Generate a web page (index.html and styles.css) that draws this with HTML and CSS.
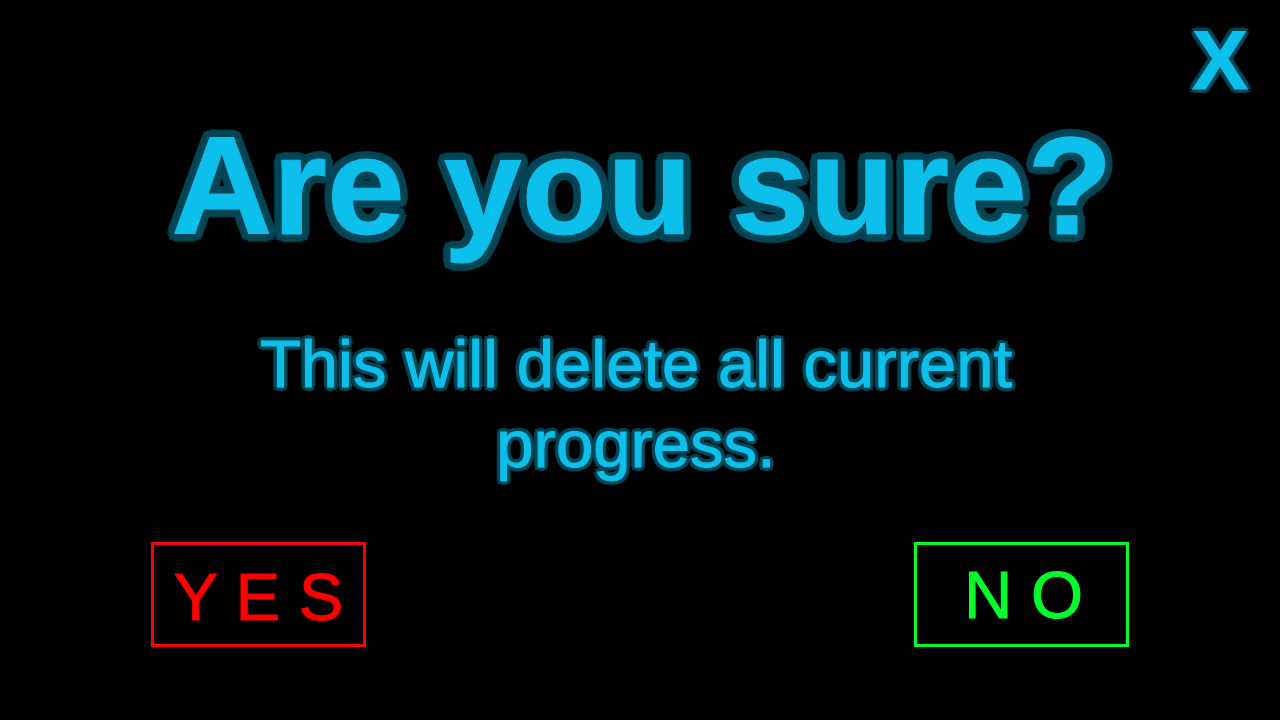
FILE: index.html
```html
<!DOCTYPE html>
<html lang="en">
<head>
<meta charset="utf-8">
<title>Are you sure?</title>
<link rel="stylesheet" href="styles.css">
</head>
<body>
<main class="dialog">
  <header class="top"><button class="close" type="button" aria-label="X, close">X</button></header>
  <h1 class="title">Are you sure?</h1>
  <p class="message">This will delete all current progress.</p>
  <div class="actions">
    <button class="choice yes" type="button">Y E S</button>
    <button class="choice no" type="button">N O</button>
  </div>
</main>
</body>
</html>
```

FILE: styles.css
```css
* { box-sizing: border-box; }
body {
  margin: 0;
  background: #000;
  color: #0dbfeb;
  font-family: "Liberation Sans", Arial, sans-serif;
}
.dialog {
  display: flex;
  flex-direction: column;
  min-height: 100vh;
}
.top {
  display: flex;
  justify-content: flex-end;
  padding: 12px 32px 0 0;
}
button {
  padding: 0;
  background: none;
  font-family: inherit;
  cursor: pointer;
}
.close {
  border: 0;
  color: inherit;
  font-size: 84px;
  font-weight: bold;
  line-height: 96px;
  -webkit-text-stroke: 1px #0dbfeb;
}
.title {
  margin: 0;
  padding-left: 4px;
  font-size: 140px;
  line-height: 156px;
  text-align: center;
  -webkit-text-stroke: 1px #0dbfeb;
}
.message {
  max-width: 880px;
  margin: 60px auto 0;
  padding-right: 8px;
  font-size: 67px;
  line-height: 80px;
  text-align: center;
  -webkit-text-stroke: 1px #0dbfeb;
}
/* Outline glow: a ring of copies around each letter */
.title {
  text-shadow:
    8px 0 1px #044656, 7px 3px 1px #044656, 6px 6px 1px #044656, 3px 7px 1px #044656,
    0 8px 1px #044656, -3px 7px 1px #044656, -6px 6px 1px #044656, -7px 3px 1px #044656,
    -8px 0 1px #044656, -7px -3px 1px #044656, -6px -6px 1px #044656, -3px -7px 1px #044656,
    0 -8px 1px #044656, 3px -7px 1px #044656, 6px -6px 1px #044656, 7px -3px 1px #044656;
}
.close, .message {
  text-shadow:
    4px 0 1px #044656, 3px 3px 1px #044656, 0 4px 1px #044656, -3px 3px 1px #044656,
    -4px 0 1px #044656, -3px -3px 1px #044656, 0 -4px 1px #044656, 3px -3px 1px #044656;
}
.actions {
  display: flex;
  justify-content: space-between;
  margin-top: 58px;
  padding: 0 151px;
}
.choice {
  width: 215px;
  height: 105px;
  border: 3px solid;
  font-size: 67px;
  line-height: 80px;
}
.yes { color: #f00; padding-top: 4px; -webkit-text-stroke: 1px #f00; }
.no { color: #00ff2a; padding-left: 4px; -webkit-text-stroke: 1px #00ff2a; }
```
